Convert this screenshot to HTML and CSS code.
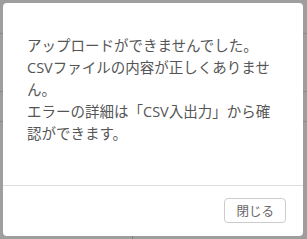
FILE: index.html
```html
<!DOCTYPE html>
<html lang="ja">
<head>
  <meta charset="UTF-8" />
  <meta name="viewport" content="width=device-width, initial-scale=1.0" />
  <title>アップロードエラー</title>
  <link rel="stylesheet" href="styles.css">
</head>
<body>
  <!-- Page behind the overlay -->
  <div class="page">
    <div class="row"></div>
    <div class="row"></div>
    <div class="row"></div>
    <div class="col"></div>
  </div>

  <!-- Modal -->
  <div class="overlay">
    <div class="dialog">
      <div class="dialog-body">
        <p>アップロードができませんでした。<br>CSVファイルの内容が正しくありません。<br>エラーの詳細は「CSV入出力」から確認ができます。</p>
      </div>
      <div class="dialog-footer">
        <button class="btn">閉じる</button>
      </div>
    </div>
  </div>
</body>
</html>
```

FILE: styles.css
```css
/* ===== Base reset ===== */
* { box-sizing: border-box; margin: 0; padding: 0; }
html, body { height: 100%; }
body {
  font-family: "Open Sans", "Noto Sans CJK JP", sans-serif;
  color: #555;
  background: #fff;
  overflow: hidden;
}

/* ===== Underlying page ===== */
.page { position: relative; height: 100%; }
.row { height: 30px; border-bottom: 1px solid #ddd; }
.row:first-child { height: 34px; }
.row:nth-child(2) { height: 58px; }
.col { position: absolute; left: 132px; top: 200px; bottom: 0; border-left: 1px solid #ccc; }

/* ===== Overlay ===== */
.overlay {
  position: fixed;
  inset: 0;
  background: rgba(0, 0, 0, 0.38);
  padding: 3px 4px 3px 3px;
}
.dialog {
  height: 100%;
  background: #fff;
  border-radius: 4px;
  display: flex;
  flex-direction: column;
}
.dialog-body {
  flex: 1;
  padding: 32px 27px 0 24px;
  font-size: 14.5px;
  line-height: 22px;
  text-spacing-trim: space-all;
}
.dialog-footer {
  border-top: 1px solid #ddd;
  padding: 12px 17px 13px;
  display: flex;
  justify-content: flex-end;
}
.btn {
  height: 25px;
  padding: 0 11px;
  font-family: inherit;
  font-size: 12.5px;
  color: #666;
  background: #fff;
  border: 1px solid #ccc;
  border-radius: 4px;
}
```
